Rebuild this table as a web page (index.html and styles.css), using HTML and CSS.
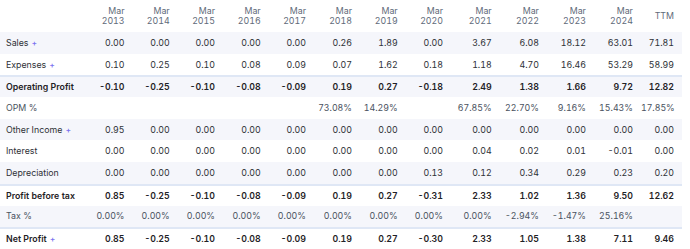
FILE: index.html
```html
<!DOCTYPE html>
<html>
<head>
<meta charset="utf-8">
<link rel="stylesheet" href="styles.css">
</head>
<body>
<table class="pl">
  <thead>
    <tr>
      <th class="lbl"></th>
      <th>Mar<br>2013</th><th>Mar<br>2014</th><th>Mar<br>2015</th><th>Mar<br>2016</th><th>Mar<br>2017</th><th>Mar<br>2018</th><th>Mar<br>2019</th><th>Mar<br>2020</th><th>Mar<br>2021</th><th>Mar<br>2022</th><th>Mar<br>2023</th><th>Mar<br>2024</th><th>TTM</th>
    </tr>
  </thead>
  <tbody>
    <tr><td class="lbl">Sales <span class="plus">+</span></td><td>0.00</td><td>0.00</td><td>0.00</td><td>0.00</td><td>0.00</td><td>0.26</td><td>1.89</td><td>0.00</td><td>3.67</td><td>6.08</td><td>18.12</td><td>63.01</td><td>71.81</td></tr>
    <tr><td class="lbl">Expenses <span class="plus">+</span></td><td>0.10</td><td>0.25</td><td>0.10</td><td>0.08</td><td>0.09</td><td>0.07</td><td>1.62</td><td>0.18</td><td>1.18</td><td>4.70</td><td>16.46</td><td>53.29</td><td>58.99</td></tr>
    <tr class="strong"><td class="lbl">Operating Profit</td><td>-0.10</td><td>-0.25</td><td>-0.10</td><td>-0.08</td><td>-0.09</td><td>0.19</td><td>0.27</td><td>-0.18</td><td>2.49</td><td>1.38</td><td>1.66</td><td>9.72</td><td>12.82</td></tr>
    <tr class="pct"><td class="lbl">OPM %</td><td></td><td></td><td></td><td></td><td></td><td>73.08%</td><td>14.29%</td><td></td><td>67.85%</td><td>22.70%</td><td>9.16%</td><td>15.43%</td><td>17.85%</td></tr>
    <tr><td class="lbl">Other Income <span class="plus">+</span></td><td>0.95</td><td>0.00</td><td>0.00</td><td>0.00</td><td>0.00</td><td>0.00</td><td>0.00</td><td>0.00</td><td>0.00</td><td>0.00</td><td>0.00</td><td>0.00</td><td>0.00</td></tr>
    <tr><td class="lbl">Interest</td><td>0.00</td><td>0.00</td><td>0.00</td><td>0.00</td><td>0.00</td><td>0.00</td><td>0.00</td><td>0.00</td><td>0.04</td><td>0.02</td><td>0.01</td><td>-0.01</td><td>0.00</td></tr>
    <tr><td class="lbl">Depreciation</td><td>0.00</td><td>0.00</td><td>0.00</td><td>0.00</td><td>0.00</td><td>0.00</td><td>0.00</td><td>0.13</td><td>0.12</td><td>0.34</td><td>0.29</td><td>0.23</td><td>0.20</td></tr>
    <tr class="strong"><td class="lbl">Profit before tax</td><td>0.85</td><td>-0.25</td><td>-0.10</td><td>-0.08</td><td>-0.09</td><td>0.19</td><td>0.27</td><td>-0.31</td><td>2.33</td><td>1.02</td><td>1.36</td><td>9.50</td><td>12.62</td></tr>
    <tr class="pct"><td class="lbl">Tax %</td><td>0.00%</td><td>0.00%</td><td>0.00%</td><td>0.00%</td><td>0.00%</td><td>0.00%</td><td>0.00%</td><td>0.00%</td><td>0.00%</td><td>-2.94%</td><td>-1.47%</td><td>25.16%</td><td></td></tr>
    <tr class="strong"><td class="lbl">Net Profit <span class="plus">+</span></td><td>0.85</td><td>-0.25</td><td>-0.10</td><td>-0.08</td><td>-0.09</td><td>0.19</td><td>0.27</td><td>-0.30</td><td>2.33</td><td>1.05</td><td>1.38</td><td>7.11</td><td>9.46</td></tr>
  </tbody>
</table>
</body>
</html>
```

FILE: styles.css
```css
html, body {
  margin: 0;
  padding: 0;
  background: #ffffff;
}

.pl {
  border-collapse: collapse;
  table-layout: fixed;
  width: 682px;
  font-family: Inter, "Noto Sans", sans-serif;
  font-size: 8.8px;
  color: #2e3136;
}

.pl th, .pl td {
  padding: 0 8px 0 0;
  text-align: right;
  white-space: nowrap;
  font-variant-numeric: tabular-nums;
}

.pl th {
  height: 32px;
  font-weight: 400;
  color: #5f6b7a;
  line-height: 10.5px;
  vertical-align: middle;
}

.pl td {
  height: 21.7px;
  line-height: 12px;
  vertical-align: middle;
}

.pl th:nth-child(1) { width: 81px; }
.pl th:nth-child(2) { width: 37.5px; }
.pl th:nth-child(3) { width: 37.2px; }
.pl th:nth-child(4) { width: 37.3px; }
.pl th:nth-child(5) { width: 37.7px; }
.pl th:nth-child(6) { width: 37.3px; }
.pl th:nth-child(7) { width: 38px; }
.pl th:nth-child(8) { width: 37.7px; }
.pl th:nth-child(9) { width: 37.3px; }
.pl th:nth-child(10) { width: 40.7px; }
.pl th:nth-child(11) { width: 39.3px; }
.pl th:nth-child(12) { width: 39px; }
.pl th:nth-child(13) { width: 39px; }
.pl th:nth-child(14) { width: 33px; }

.pl .lbl {
  text-align: left;
  padding: 0 0 0 6px;
}

.pl tbody tr:nth-child(odd) {
  background: #f5f6fb;
}

.pl tr.strong td {
  font-weight: 600;
  color: #1f2226;
  border-top: 2px solid #dfe7f5;
  height: 19.7px;
}

.pl tr.pct td {
  color: #4a5260;
}

.plus {
  color: #7b73f0;
  font-weight: 600;
  font-size: 8px;
  margin-left: 1px;
}
```
